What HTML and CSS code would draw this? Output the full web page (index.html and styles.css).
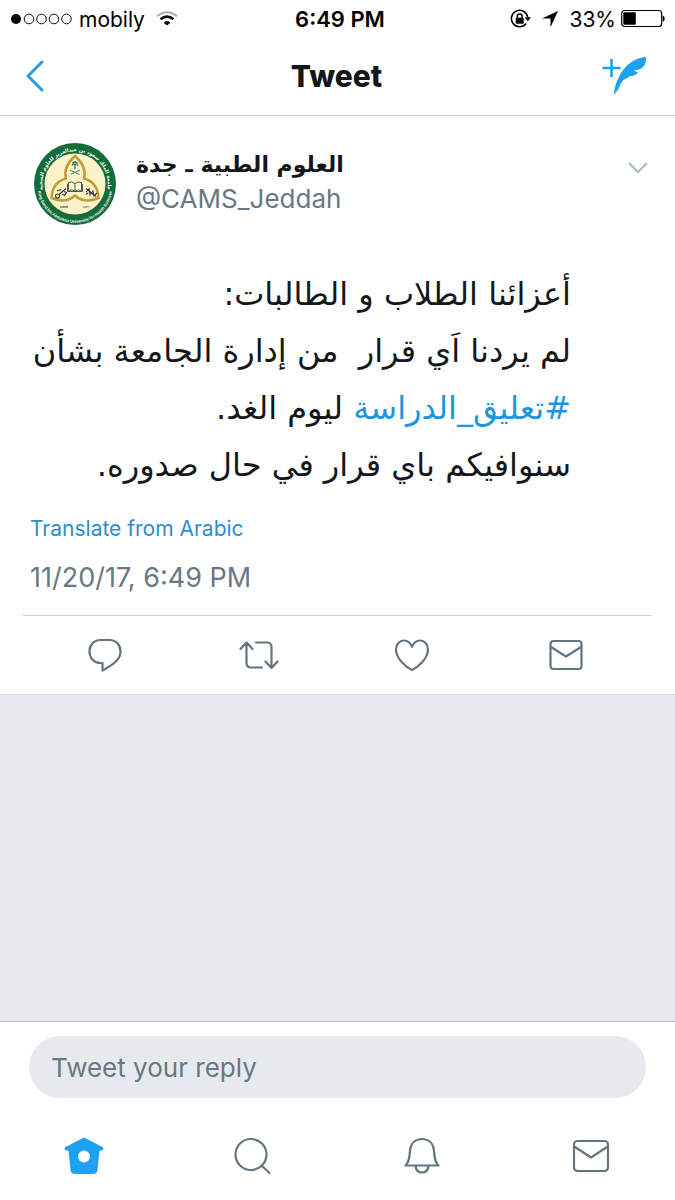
FILE: index.html
```
<!DOCTYPE html>
<html lang="en">
<head>
<meta charset="utf-8">
<meta name="viewport" content="width=device-width, initial-scale=1">
<title>Tweet</title>
<link rel="stylesheet" href="styles.css">
</head>
<body>
<div class="status">
  <div class="status-left">
    <svg width="62" height="14" viewBox="0 0 62 14" aria-hidden="true">
      <circle cx="6" cy="7" r="5"/>
      <g fill="none" stroke="#111" stroke-width="1"><circle cx="19" cy="7" r="4.8"/><circle cx="31.500" cy="7" r="4.800"/><circle cx="44" cy="7" r="4.800"/><circle cx="56.500" cy="7" r="4.800"/></g>
    </svg>
    <span>mobily</span>
    <svg class="wifi" width="22" height="18" viewBox="0 0 22 18" fill="none" stroke-width="2.600" aria-hidden="true">
      <path d="M1 6.200Q11-1.800 21 6.200" stroke="#aaa" stroke-width="2"/>
      <path d="M4.500 9.300Q11 3.900 17.500 9.300" stroke="#000"/>
      <path d="M8 12.500Q11 10.500 14 12.500L11 15Z" fill="#000" stroke="#000" stroke-width="1"/>
    </svg>
  </div>
  <span class="clock">6:49 PM</span>
  <div class="status-right">
    <svg width="21" height="20" viewBox="0 0 21 20" aria-hidden="true">
      <path d="M16.200 14.500A8.200 8.200 0 1 1 17.700 8" fill="none" stroke="#000" stroke-width="1.500"/>
      <path d="M14.700 8.200H21L17.800 12.200Z"/>
      <rect x="5.700" y="8.700" width="8" height="6" rx="0.800"/>
      <path d="M7.300 9V7.300a2.400 2.400 0 0 1 4.800 0V9" fill="none" stroke="#000" stroke-width="1.500"/>
    </svg>
    <svg class="locate" width="18" height="18" viewBox="0 0 18 18" aria-hidden="true"><path d="M17 1 9.500 17.200V8.500H1Z"/></svg>
    <span>33%</span>
    <svg class="battery" width="44" height="20" viewBox="0 0 44 20" aria-hidden="true">
      <rect x=".7" y="1.500" width="40" height="16" rx="3" fill="none" stroke="#000" stroke-width="1.200"/>
      <rect x="2.300" y="3.300" width="12.500" height="12.400" rx="1"/>
      <path d="M41.700 6.500q2 .3 2 3t-2 3z"/>
    </svg>
  </div>
</div>

<header class="nav">
  <button class="icon-btn" aria-label="Back"><svg width="18" height="32" viewBox="0 0 18 32" fill="none" stroke="#2a9de2" stroke-width="3" stroke-linecap="round" stroke-linejoin="round"><path d="M16 2 2 16 16 30"/></svg></button>
  <h1>Tweet</h1>
  <button class="icon-btn" aria-label="Compose tweet"><svg width="46" height="42" viewBox="0 0 46 42"><path d="M10.500 4v18M1.500 13h18" fill="none" stroke="#1da1f2" stroke-width="2.600"/><path d="M13 40C13.500 33 14.500 29 17 24 20 17 25 10 32 6 36 3.500 40 2.500 45 2c.2 4-.3 7-2.500 9.500C40.500 14 37.500 14.800 33 15.500q2 1.800 4.200 1.800C34.500 20.500 32 21.300 28.500 21.300q-.8 1.700-4.500 2.700c-3 1.500-4.500 5-6.500 10Z" fill="#1da1f2"/></svg></button>
</header>

<main class="page">
  <article class="tweet">
    <div class="author">
      <svg class="seal" width="84" height="84" viewBox="0 0 84 84" role="img" aria-label="University seal">
        <defs>
          <path id="arc-top" d="M11.200 53A32.700 32.700 0 1 1 72.800 53"/>
          <path id="arc-bottom" d="M4.800 48A37.500 37.500 0 0 0 79.200 48"/>
        </defs>
        <circle cx="42" cy="42" r="41" fill="#146c3a"/>
        <circle cx="42" cy="42" r="30.500" fill="#fbf2ca"/>
        <text class="seal-ar" text-anchor="middle"><textPath href="#arc-top" startOffset="50%">جامعة الملك سعود بن عبدالعزيز للعلوم الصحية</textPath></text>
        <text class="seal-en" text-anchor="middle"><textPath href="#arc-bottom" startOffset="50%">King Saud bin Abdulaziz University for Health Sciences</textPath></text>
        <path d="M42 14C34 21 31 29 33 36.500 24 39 19 46 18.500 56 28 60 36 59 42 53.500 48 59 56 60 65.500 56 65 46 60 39 51 36.500 53 29 50 21 42 14Z" fill="#fbf2ca" stroke="#c29b36" stroke-width="2.500" stroke-linejoin="round"/>
        <path d="M42 27v-3.500M39 23.500q1.500-3 3-.5 1.500-2.500 3 .5M39.500 21q2.500-2 5 0" fill="none" stroke="#23804a" stroke-width="1.300"/>
        <path d="m37 28 9.500 4.500M47 28l-9.500 4.500" stroke="#53996d" stroke-width="1.100"/>
        <path d="M42 41.500Q38.500 39 35.500 40.500V48.500Q39 47 42 49Q45 47 48.500 48.500V40.500Q45.500 39 42 41.500V49M34.500 42v7.500h15V42" fill="#fff9dd" stroke="#444832" stroke-width=".9"/>
        <g fill="none" stroke="#34382c" stroke-width="1.100"><circle cx="24.500" cy="54" r="2"/><path d="m26 52.500 7-6M29 52l2.500 1.500 2-3-2.500-1M24 49l4-1.500M53 46.500l10 8M53 50l3-3 1 6 3-4 1 5 3-3M55 51l-2 1.500"/></g>
        <text class="seal-year" x="31" y="66" text-anchor="middle">2005</text>
        <text class="seal-year" x="53" y="66" text-anchor="middle">١٤٢٦</text>
      </svg>
      <div class="names">
        <strong class="name" dir="rtl" lang="ar">العلوم الطبية ـ جدة</strong>
        <a class="handle" href="#profile">@CAMS_Jeddah</a>
      </div>
      <button class="icon-btn more" aria-label="More"><svg width="22" height="13" viewBox="0 0 22 13" fill="none" stroke="#aab8c2" stroke-width="2"><path d="m2 2 9 9 9-9"/></svg></button>
    </div>
    <p class="text" dir="rtl" lang="ar">أعزائنا الطلاب و الطالبات:<br>لم يردنا اَي قرار &nbsp;من إدارة الجامعة بشأن<br><a href="#tag">#تعليق_الدراسة</a> ليوم الغد.<br>سنوافيكم باي قرار في حال صدوره.</p>
    <a class="translate" href="#translate">Translate from Arabic</a>
    <time class="date" datetime="2017-11-20T18:49">11/20/17, 6:49 PM</time>
    <div class="actions">
      <button class="icon-btn" aria-label="Reply"><svg width="36" height="36" viewBox="0 0 36 36"><path d="M13.500 3h9C29 3 33.500 8 33.500 14.500c0 7-5 12-18 19V26h-2C7 26 2.500 21 2.500 14.500S7 3 13.500 3Z"/></svg></button>
      <button class="icon-btn" aria-label="Retweet"><svg width="40" height="36" viewBox="0 0 40 36"><path d="M1.500 12 7.500 5.500 13.500 12M7.500 6v20q0 4.500 4.500 4.500h11M17 5.500h11q4.500 0 4.500 4.500v20M26.500 24.500l6 6.500 6-6.500"/></svg></button>
      <button class="icon-btn" aria-label="Like"><svg width="36" height="36" viewBox="0 0 36 36"><path d="M18 33C13 31 2 22 2 12.500 2 7 5.500 3.500 10 3.500c4 0 6.500 2.500 8 6.300 1.500-3.800 4-6.300 8-6.300 4.500 0 8 3.500 8 9C34 22 23 31 18 33Z"/></svg></button>
      <button class="icon-btn" aria-label="Share by message"><svg width="36" height="36" viewBox="0 0 36 36"><rect x="2.500" y="4" width="31" height="28" rx="3"/><path d="m3 10 15 9.500L33 10"/></svg></button>
    </div>
  </article>
</main>

<footer class="dock">
  <form class="reply"><input type="text" aria-label="Tweet your reply" placeholder="Tweet your reply"></form>
  <nav class="tabs">
    <a href="#home" aria-label="Home"><svg width="42" height="40" viewBox="0 0 42 40"><path class="home" fill-rule="evenodd" d="M21 1.500 40 11.200q1.200 1.800-.5 3.300H36.500L34.500 34q-.5 4-4.500 4H12q-4 0-4.500-4L5.500 14.500H2.500Q.8 13 2 11.200ZM21 14.500a6 6 0 1 0 0 12 6 6 0 0 0 0-12Z"/></svg></a>
    <a href="#search" aria-label="Search"><svg width="40" height="40" viewBox="0 0 40 40"><circle cx="18" cy="18.500" r="15.500"/><path d="m28.500 29.500 8 7.500"/></svg></a>
    <a href="#notifications" aria-label="Notifications"><svg width="40" height="40" viewBox="0 0 40 40"><path d="M3.500 29.500C7 26 7.500 22 8 15 8.500 7.500 13 3 20 3s11.500 4.500 12 12c.5 7 1 11 4.500 14.500ZM13.500 30c.5 4 3 6.500 6.500 6.500s6-2.500 6.500-6.500"/></svg></a>
    <a href="#messages" aria-label="Messages"><svg width="40" height="40" viewBox="0 0 40 40"><rect x="3" y="5" width="34" height="30" rx="3.500"/><path d="m4 11 16 10.500L36 11"/></svg></a>
  </nav>
</footer>
</body>
</html>
```
FILE: styles.css
```
* { box-sizing: border-box; }

body {
  margin: 0;
  min-height: 100vh;
  display: flex;
  flex-direction: column;
  background: #fefefe;
  color: #14171a;
  font-family: Inter, "DejaVu Sans", sans-serif;
}

svg { display: block; flex: none; }
a { text-decoration: none; }

.icon-btn {
  display: block;
  padding: 0;
  border: 0;
  background: none;
}

.status {
  display: grid;
  grid-template-columns: 1fr auto 1fr;
  align-items: center;
  height: 38px;
  padding: 0 10px;
  color: #000;
  font-size: 21px;
}
.status-left, .status-right { display: flex; align-items: center; }
.status-left { gap: 7px; }
.status-right { justify-content: flex-end; }
.wifi { margin-left: 4px; }
.clock { padding-left: 5px; font-size: 22px; font-weight: 600; }
.locate { margin: 0 10px; }
.battery { margin-left: 5px; }

.nav {
  display: grid;
  grid-template-columns: 1fr auto 1fr;
  align-items: center;
  height: 78px;
  padding: 0 28px 2px 26px;
  border-bottom: 1px solid #c8cccf;
}
.nav h1 { margin: 0; font-size: 30px; font-weight: 800; }
.nav .icon-btn:last-child { justify-self: end; }

.page { flex: 1; background: #e6eaef; }
.tweet {
  background: #fefefe;
  border-bottom: 1px solid #d3d9de;
}

.author {
  display: flex;
  padding: 26px 26px 0 33px;
}
.names {
  flex: 1;
  display: flex;
  flex-direction: column;
  align-items: flex-start;
  margin-left: 19px;
  padding-top: 5px;
}
.name {
  font: bold 22px/36px "DejaVu Sans", sans-serif;
}
.handle { color: #697882; font-size: 26px; line-height: 32px; }
.more { align-self: flex-start; margin-top: 19px; }

.text {
  margin: 40px 104px 0 24px;
  font: 32px/57px "DejaVu Sans", sans-serif;
}
.text a { color: #1b95e0; }

.translate {
  display: block;
  margin: 20px 30px 0;
  color: #2b8fc9;
  font-size: 21px;
  line-height: 30px;
}
.date {
  display: block;
  margin: 15px 30px 0;
  color: #697882;
  font-size: 27px;
  line-height: 38px;
}

.actions {
  display: grid;
  grid-template-columns: repeat(4, 1fr);
  justify-items: center;
  align-items: center;
  height: 79px;
  margin: 18px 23px 0;
  padding: 0 9px 0 5px;
  border-top: 1px solid #ccd3d8;
}
.actions svg, .tabs svg {
  fill: none;
  stroke: #657580;
  stroke-width: 2.2;
  stroke-linecap: round;
  stroke-linejoin: round;
}

.dock { border-top: 1px solid #b4bcc3; }
.reply { padding: 14px 29px 0; }
.reply input {
  display: block;
  width: 100%;
  height: 62px;
  padding: 0 22px;
  border: 0;
  border-radius: 31px;
  background: #e6eaef;
  color: #14171a;
  font: 26px Inter, sans-serif;
}
.reply input::placeholder { color: #697882; opacity: 1; }

.tabs {
  display: grid;
  grid-template-columns: repeat(4, 1fr);
  justify-items: center;
  align-items: center;
  height: 102px;
}
.tabs a { margin-top: 14px; }
.tabs .home { fill: #1da1f2; stroke: none; }

.seal-ar { font: bold 5px "DejaVu Sans", sans-serif; fill: #fff; }
.seal-en { font: bold 4px "Liberation Sans", sans-serif; fill: #fff; }
.seal-year { font: bold 3px "DejaVu Sans", sans-serif; fill: #555; }
```
